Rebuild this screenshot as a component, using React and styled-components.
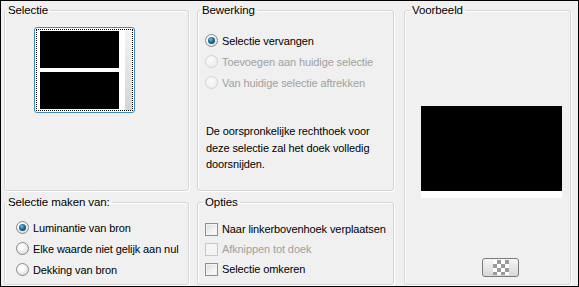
import React from "react"
import styled, { createGlobalStyle } from "styled-components"

const GlobalStyle = createGlobalStyle`
  html, body {
    margin: 0;
    padding: 0;
    background: #f0f0f0;
  }
  body {
    font-family: "Liberation Sans", Arial, sans-serif;
    font-size: 11px;
    letter-spacing: -0.1px;
    color: #000;
  }
`

/** WINDOW **/
const Dialog = styled.div`
  box-sizing: border-box;
  width: 579px;
  height: 287px;
  border: 1px solid #000;
  background: #f0f0f0;
  display: grid;
  grid-template-columns: 193px 207px 167px;
  grid-template-rows: 188px 90px;
  row-gap: 4px;
  padding: 2px 0 0 3px;
`

const Group = styled.fieldset`
  box-sizing: border-box;
  margin: 0 ${p => p.$mr || 0}px 0 0;
  padding: 0;
  min-width: 0;
  border: 1px solid #d5d5d5;
  border-radius: 3px;
  box-shadow: inset 1px 1px 0 #fff, 1px 1px 0 #fff;
  grid-row: ${p => p.$row || "auto"};
  display: flex;
  flex-direction: column;
`

const Legend = styled.legend`
  padding: 0 2px;
  margin-left: ${p => p.$indent || 1}px;
  line-height: 14px;
  font-size: 11.5px;
`

/** RADIOS AND CHECKBOXES **/
const OptionList = styled.div`
  display: flex;
  flex-direction: column;
  padding: ${p => p.$top || 0}px 0 0 ${p => p.$left || 0}px;
`

const OptionRow = styled.label`
  display: flex;
  align-items: center;
  height: ${p => p.$h || 21}px;
  gap: 4px;
  color: ${p => (p.$disabled ? "#a0a0a0" : "#000")};
  white-space: nowrap;
`

const RadioMark = styled.span`
  box-sizing: border-box;
  width: 13px;
  height: 13px;
  border-radius: 50%;
  flex: none;
  border: 1px solid ${p => (p.$disabled ? "#d2d2d2" : "#8a8a8a")};
  background: ${p =>
    p.$disabled
      ? "radial-gradient(circle at 40% 35%, #fafafa, #ebebeb)"
      : "radial-gradient(circle at 40% 35%, #ffffff 20%, #d8d8d8 90%)"};
  display: flex;
  align-items: center;
  justify-content: center;

  &::after {
    content: "";
    display: ${p => (p.$checked ? "block" : "none")};
    width: 7px;
    height: 7px;
    border-radius: 50%;
    background: radial-gradient(circle at 40% 35%, #6ec3e8 0%, #1b6a95 45%, #0f3f5e 100%);
  }
`

const CheckMark = styled.span`
  box-sizing: border-box;
  width: 13px;
  height: 13px;
  flex: none;
  border: 1px solid ${p => (p.$disabled ? "#c8c8c8" : "#8e8f8f")};
  background: ${p =>
    p.$disabled
      ? "#f4f4f4"
      : "linear-gradient(135deg, #dcdcdc 0%, #f2f2f2 60%, #ffffff 100%)"};
  box-shadow: inset 0 0 0 1px #f4f4f4;
`

const Radio = ({ label, checked, disabled }) => (
  <OptionRow $disabled={disabled}>
    <RadioMark $checked={checked} $disabled={disabled} />
    {label}
  </OptionRow>
)

const Check = ({ label, disabled }) => (
  <OptionRow $disabled={disabled} $h={20}>
    <CheckMark $disabled={disabled} />
    {label}
  </OptionRow>
)

/** SELECTION THUMBNAIL **/
const ThumbButton = styled.div`
  box-sizing: border-box;
  width: 101px;
  height: 86px;
  margin: 10px 0 0 29px;
  border: 1px solid #3c8bbf;
  border-radius: 3px;
  padding: 1px;
  background: #fff;
`

const ThumbFocus = styled.div`
  box-sizing: border-box;
  height: 100%;
  border: 1px dotted #000;
  display: grid;
  grid-template-columns: 79px 6px 1fr;
  grid-template-rows: 37px 4px 37px;
  padding: 1px 0 1px 3px;
  background: #fff;
`

const ThumbBlock = styled.div`
  background: #000;
  grid-column: 1;
  grid-row: ${p => p.$row};
`

const ThumbScroll = styled.div`
  grid-column: 3;
  grid-row: 1 / span 3;
  background: linear-gradient(#f4f4f4, #d4d4d4);
  margin: -1px 0;
`

/** DESCRIPTION **/
const Note = styled.p`
  margin: 30px 0 0 8px;
  line-height: 16.5px;
  width: 185px;
`

/** PREVIEW **/
const PreviewBody = styled.div`
  flex: 1;
  display: flex;
  flex-direction: column;
  align-items: center;
`

const PreviewImage = styled.div`
  width: 141px;
  height: 92px;
  margin: 89px 0 0 8px;
  background: #fff;
  border-top: 85px solid #000;
  box-sizing: border-box;
`

const SmallButton = styled.div`
  box-sizing: border-box;
  width: 37px;
  height: 19px;
  margin: 60px 0 0 26px;
  border: 1px solid #7a7a7a;
  border-radius: 3px;
  background: linear-gradient(#f6f6f6 0%, #e6e6e6 50%, #d8d8d8 100%);
  display: flex;
  align-items: center;
  justify-content: center;
`

const Checker = styled.div`
  width: 16px;
  height: 15px;
  background-color: #fff;
  background-image: linear-gradient(45deg, #9a9a9a 25%, transparent 25%, transparent 75%, #9a9a9a 75%),
    linear-gradient(45deg, #9a9a9a 25%, transparent 25%, transparent 75%, #9a9a9a 75%);
  background-size: 8px 8px;
  background-position: 0 0, 4px 4px;
`

export default function App() {
  return (
    <>
      <GlobalStyle />
      <Dialog>
        <Group $mr={8} $row="1">
          <Legend $indent={1}>Selectie</Legend>
          <ThumbButton>
            <ThumbFocus>
              <ThumbBlock $row={1} />
              <ThumbBlock $row={3} />
              <ThumbScroll />
            </ThumbFocus>
          </ThumbButton>
        </Group>

        <Group $mr={10} $row="1">
          <Legend $indent={2}>Bewerking</Legend>
          <OptionList $top={13} $left={7}>
            <Radio label="Selectie vervangen" checked />
            <Radio label="Toevoegen aan huidige selectie" disabled />
            <Radio label="Van huidige selectie aftrekken" disabled />
          </OptionList>
          <Note>
            De oorspronkelijke rechthoek voor deze selectie zal het doek volledig doorsnijden.
          </Note>
        </Group>

        <Group $mr={0} $row="1 / span 2">
          <Legend $indent={5}>Voorbeeld</Legend>
          <PreviewBody>
            <PreviewImage />
            <SmallButton>
              <Checker />
            </SmallButton>
          </PreviewBody>
        </Group>

        <Group $mr={8} $row="2">
          <Legend $indent={1}>Selectie maken van:</Legend>
          <OptionList $top={8} $left={11}>
            <Radio label="Luminantie van bron" checked />
            <Radio label="Elke waarde niet gelijk aan nul" />
            <Radio label="Dekking van bron" />
          </OptionList>
        </Group>

        <Group $mr={10} $row="2">
          <Legend $indent={5}>Opties</Legend>
          <OptionList $top={10} $left={7}>
            <Check label="Naar linkerbovenhoek verplaatsen" />
            <Check label="Afknippen tot doek" disabled />
            <Check label="Selectie omkeren" />
          </OptionList>
        </Group>
      </Dialog>
    </>
  )
}
